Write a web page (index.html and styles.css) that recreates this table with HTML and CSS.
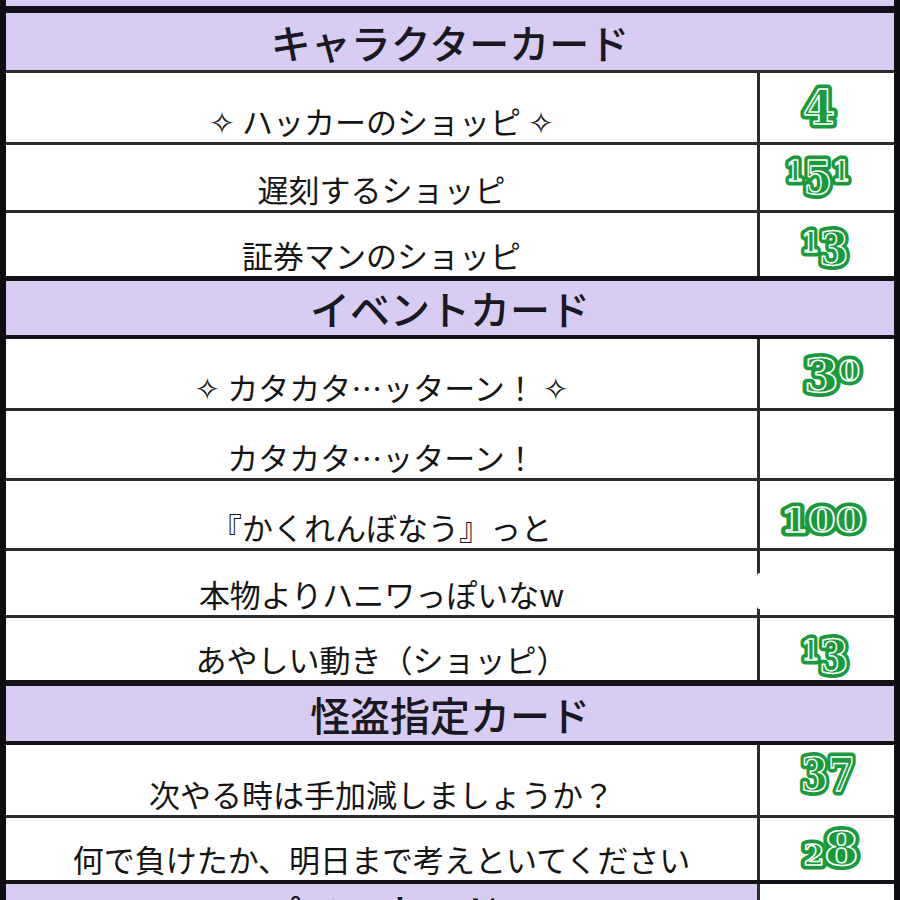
FILE: index.html
```html
<!DOCTYPE html>
<html lang="ja">
<head>
<meta charset="utf-8">
<title>カード一覧</title>
<link rel="stylesheet" href="styles.css">
</head>
<body>
<div class="sheet">
  <div class="cap"></div>

  <div class="head h60 b3">キャラクターカード</div>

  <div class="row h72 b3">
    <div class="name">✧ ハッカーのショッピ ✧</div>
    <div class="val">
      <svg class="num" viewBox="0 0 134 60" width="134" height="60">
        <defs><text id="n1" class="nt" x="59" y="38" text-anchor="middle"><tspan class="b" dy="13">4</tspan></text></defs>
        <use href="#n1" class="o"/><use href="#n1" class="i"/>
      </svg>
    </div>
  </div>

  <div class="row h68 b3">
    <div class="name">遅刻するショッピ</div>
    <div class="val">
      <svg class="num" viewBox="0 0 134 60" width="134" height="60">
        <defs><text id="n2" class="nt" x="58" y="36" text-anchor="middle" textLength="64" lengthAdjust="spacingAndGlyphs"><tspan class="s">1</tspan><tspan class="b" dy="13">5</tspan><tspan class="s" dy="-13">1</tspan></text></defs>
        <use href="#n2" class="o"/><use href="#n2" class="i"/>
      </svg>
    </div>
  </div>

  <div class="row h68 b5">
    <div class="name">証券マンのショッピ</div>
    <div class="val">
      <svg class="num" viewBox="0 0 134 60" width="134" height="60">
        <defs><text id="n3" class="nt" x="65" y="39" text-anchor="middle" textLength="47" lengthAdjust="spacingAndGlyphs"><tspan class="s">1</tspan><tspan class="b" dy="13">3</tspan></text></defs>
        <use href="#n3" class="o"/><use href="#n3" class="i"/>
      </svg>
    </div>
  </div>

  <div class="head h58 b4">イベントカード</div>

  <div class="row h72 b3">
    <div class="name">✧ カタカタ…ッターン！ ✧</div>
    <div class="val">
      <svg class="num" viewBox="0 0 134 60" width="134" height="60">
        <defs><text id="n4" class="nt" x="72" y="40" text-anchor="middle" textLength="56" lengthAdjust="spacingAndGlyphs"><tspan class="b" dy="13">3</tspan><tspan class="s" dy="-11">0</tspan></text></defs>
        <use href="#n4" class="o"/><use href="#n4" class="i"/>
      </svg>
    </div>
  </div>

  <div class="row h70 b3">
    <div class="name">カタカタ…ッターン！</div>
    <div class="val"></div>
  </div>

  <div class="row h70 b3">
    <div class="name">『かくれんぼなう』っと</div>
    <div class="val">
      <svg class="num" viewBox="0 0 134 60" width="134" height="60">
        <defs><text id="n6" class="nt" x="62" y="51" text-anchor="middle" textLength="82" lengthAdjust="spacingAndGlyphs"><tspan class="m">100</tspan></text></defs>
        <use href="#n6" class="o"/><use href="#n6" class="i"/>
      </svg>
    </div>
  </div>

  <div class="row h67 b3">
    <div class="name">本物よりハニワっぽいなw</div>
    <div class="val"><span class="smudge"></span></div>
  </div>

  <div class="row h68 b6">
    <div class="name">あやしい動き（ショッピ）</div>
    <div class="val">
      <svg class="num" viewBox="0 0 134 60" width="134" height="60">
        <defs><text id="n8" class="nt" x="65" y="42" text-anchor="middle" textLength="47" lengthAdjust="spacingAndGlyphs"><tspan class="s">1</tspan><tspan class="b" dy="13">3</tspan></text></defs>
        <use href="#n8" class="o"/><use href="#n8" class="i"/>
      </svg>
    </div>
  </div>

  <div class="head h59 b4">怪盗指定カード</div>

  <div class="row h73 b3">
    <div class="name">次やる時は手加減しましょうか？</div>
    <div class="val">
      <svg class="num" viewBox="0 0 134 60" width="134" height="60">
        <defs><text id="n9" class="nt" x="68" y="36" text-anchor="middle" textLength="54" lengthAdjust="spacingAndGlyphs"><tspan class="b" dy="10">37</tspan></text></defs>
        <use href="#n9" class="o"/><use href="#n9" class="i"/>
      </svg>
    </div>
  </div>

  <div class="row h66 b4">
    <div class="name">何で負けたか、明日まで考えといてください</div>
    <div class="val">
      <svg class="num" viewBox="0 0 134 60" width="134" height="60">
        <defs><text id="n10" class="nt" x="71" y="47" text-anchor="middle" textLength="55" lengthAdjust="spacingAndGlyphs"><tspan class="s">2</tspan><tspan class="b">8</tspan></text></defs>
        <use href="#n10" class="o"/><use href="#n10" class="i"/>
      </svg>
    </div>
  </div>

  <div class="row h60">
    <div class="name tinted">パワーカード</div>
    <div class="val"></div>
  </div>
</div>
</body>
</html>
```

FILE: styles.css
```css
* {
  box-sizing: border-box;
}

html,
body {
  margin: 0;
  padding: 0;
  background: #ffffff;
}

.sheet {
  width: 900px;
  height: 900px;
  overflow: hidden;
  border-left: 6px solid #0e0d12;
  border-right: 6px solid #0e0d12;
  font-family: "Noto Sans CJK JP", "DejaVu Sans", sans-serif;
  color: #151515;
}

.cap {
  height: 13px;
  background: #d8ccf2;
  border-bottom: 7px solid #13101b;
}

.head {
  display: flex;
  align-items: center;
  justify-content: center;
  background: #d8ccf2;
  font-size: 40px;
  font-weight: 500;
  line-height: 1;
  color: #1a1820;
}

.row {
  display: grid;
  grid-template-columns: 754px 1fr;
  grid-template-rows: 100%;
}

.name {
  display: flex;
  align-items: flex-end;
  justify-content: center;
  padding-bottom: 5px;
  border-right: 3px solid #2c2c2c;
  font-size: 31px;
  font-weight: 400;
  line-height: 32px;
  white-space: nowrap;
}

.name.tinted {
  background: #d8ccf2;
  align-items: flex-start;
  padding-top: 8px;
  font-size: 40px;
  font-weight: 500;
  line-height: 40px;
}

.val {
  position: relative;
  overflow: visible;
}

.smudge {
  position: absolute;
  left: -5px;
  top: 22px;
  width: 8px;
  height: 36px;
  border-radius: 50% 0 0 50%;
  background: #ffffff;
}

.num {
  display: block;
  overflow: visible;
}

.nt {
  font-family: "DejaVu Serif", serif;
  font-weight: bold;
}

.nt .s {
  font-size: 28px;
}

.nt .b {
  font-size: 46px;
}

.nt .m {
  font-size: 33px;
}

use.o {
  fill: #1b9a3b;
  stroke: #1b9a3b;
  stroke-width: 9px;
  stroke-linejoin: round;
}

use.i {
  fill: #1b9a3b;
  stroke: #ffffff;
  stroke-width: 1.5px;
  stroke-linejoin: round;
}

.b3 { border-bottom: 3px solid #2c2c2c; }
.b4 { border-bottom: 4px solid #141218; }
.b5 { border-bottom: 5px solid #141218; }
.b6 { border-bottom: 6px solid #141218; }

.h58 { height: 58px; }
.h59 { height: 59px; }
.h60 { height: 60px; }
.h66 { height: 66px; }
.h67 { height: 67px; }
.h68 { height: 68px; }
.h70 { height: 70px; }
.h72 { height: 72px; }
.h73 { height: 73px; }
```
